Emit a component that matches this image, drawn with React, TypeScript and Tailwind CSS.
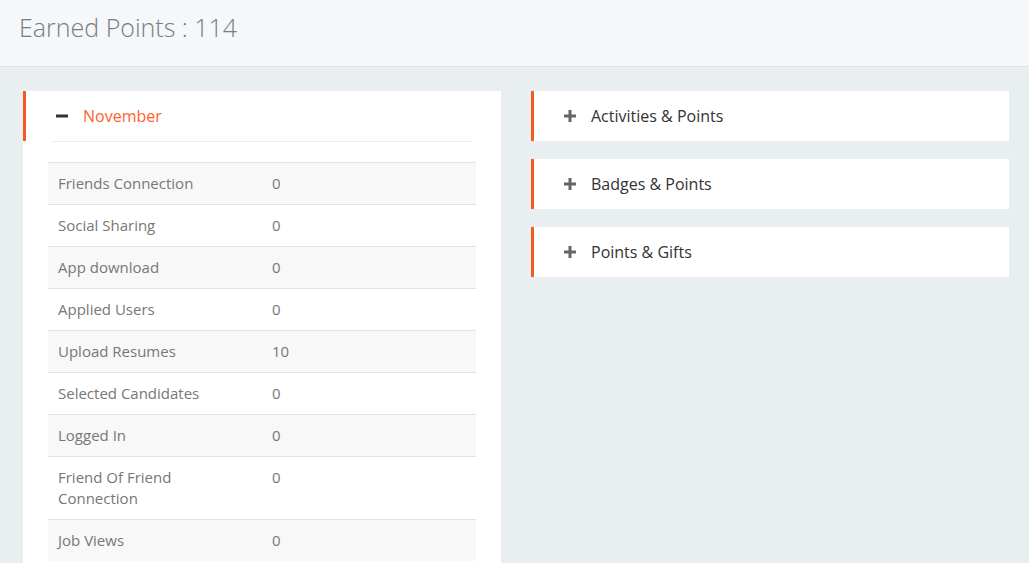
import React from 'react';

const rows: { label: string; value: string }[] = [
  { label: 'Friends Connection', value: '0' },
  { label: 'Social Sharing', value: '0' },
  { label: 'App download', value: '0' },
  { label: 'Applied Users', value: '0' },
  { label: 'Upload Resumes', value: '10' },
  { label: 'Selected Candidates', value: '0' },
  { label: 'Logged In', value: '0' },
  { label: 'Friend Of Friend Connection', value: '0' },
  { label: 'Job Views', value: '0' },
];

const sections = ['Activities & Points', 'Badges & Points', 'Points & Gifts'];

function PlusIcon() {
  return (
    <svg width="12" height="12" viewBox="0 0 12 12" className="shrink-0">
      <rect x="4.5" y="0" width="3" height="12" fill="#666" />
      <rect x="0" y="4.5" width="12" height="3" fill="#666" />
    </svg>
  );
}

function MinusIcon() {
  return (
    <svg width="12" height="12" viewBox="0 0 12 12" className="shrink-0">
      <rect x="0" y="4.5" width="12" height="3" fill="#333" />
    </svg>
  );
}

function App() {
  return (
    <div className="min-h-screen bg-[#e9eef1] font-['Open_Sans',sans-serif]">
      <header className="h-[67px] border-b border-[#dce1e5] bg-[#f5f7f9] px-[19px] pt-[11px]">
        <h1 className="text-[25px] font-light leading-[32px] text-[#767d85]">
          Earned Points : 114
        </h1>
      </header>

      <main className="flex gap-[30px] pl-[23px] pr-[20px] pt-[24px]">
        <section className="w-[478px] shrink-0 bg-white pb-4">
          <div className="flex h-[50px] items-center border-l-[3px] border-[#f15a24] pl-[30px]">
            <MinusIcon />
            <span className="ml-[15px] text-[16px] text-[#ff5f2e]">November</span>
          </div>
          <div className="mx-[28px] border-t border-[#eceeef]" />

          <table className="mx-[25px] mt-[20px] w-[428px] border-collapse text-[15px] leading-[21px] text-[#777]">
            <tbody>
              {rows.map((row, i) => (
                <tr
                  key={row.label}
                  className={
                    i % 2 === 0
                      ? 'border-t border-[#e3e3e3] bg-[#f8f8f8]'
                      : 'border-t border-[#e3e3e3] bg-white'
                  }
                >
                  <td className="w-[214px] px-[10px] py-[10px] align-top">{row.label}</td>
                  <td className="px-[10px] py-[10px] align-top">{row.value}</td>
                </tr>
              ))}
            </tbody>
          </table>
        </section>

        <div className="flex w-[478px] flex-col gap-[18px]">
          {sections.map((title) => (
            <div
              key={title}
              className="flex h-[50px] items-center border-l-[3px] border-[#f15a24] bg-white pl-[30px]"
            >
              <PlusIcon />
              <span className="ml-[15px] text-[16px] text-[#333]">{title}</span>
            </div>
          ))}
        </div>
      </main>
    </div>
  );
}

export default App;
